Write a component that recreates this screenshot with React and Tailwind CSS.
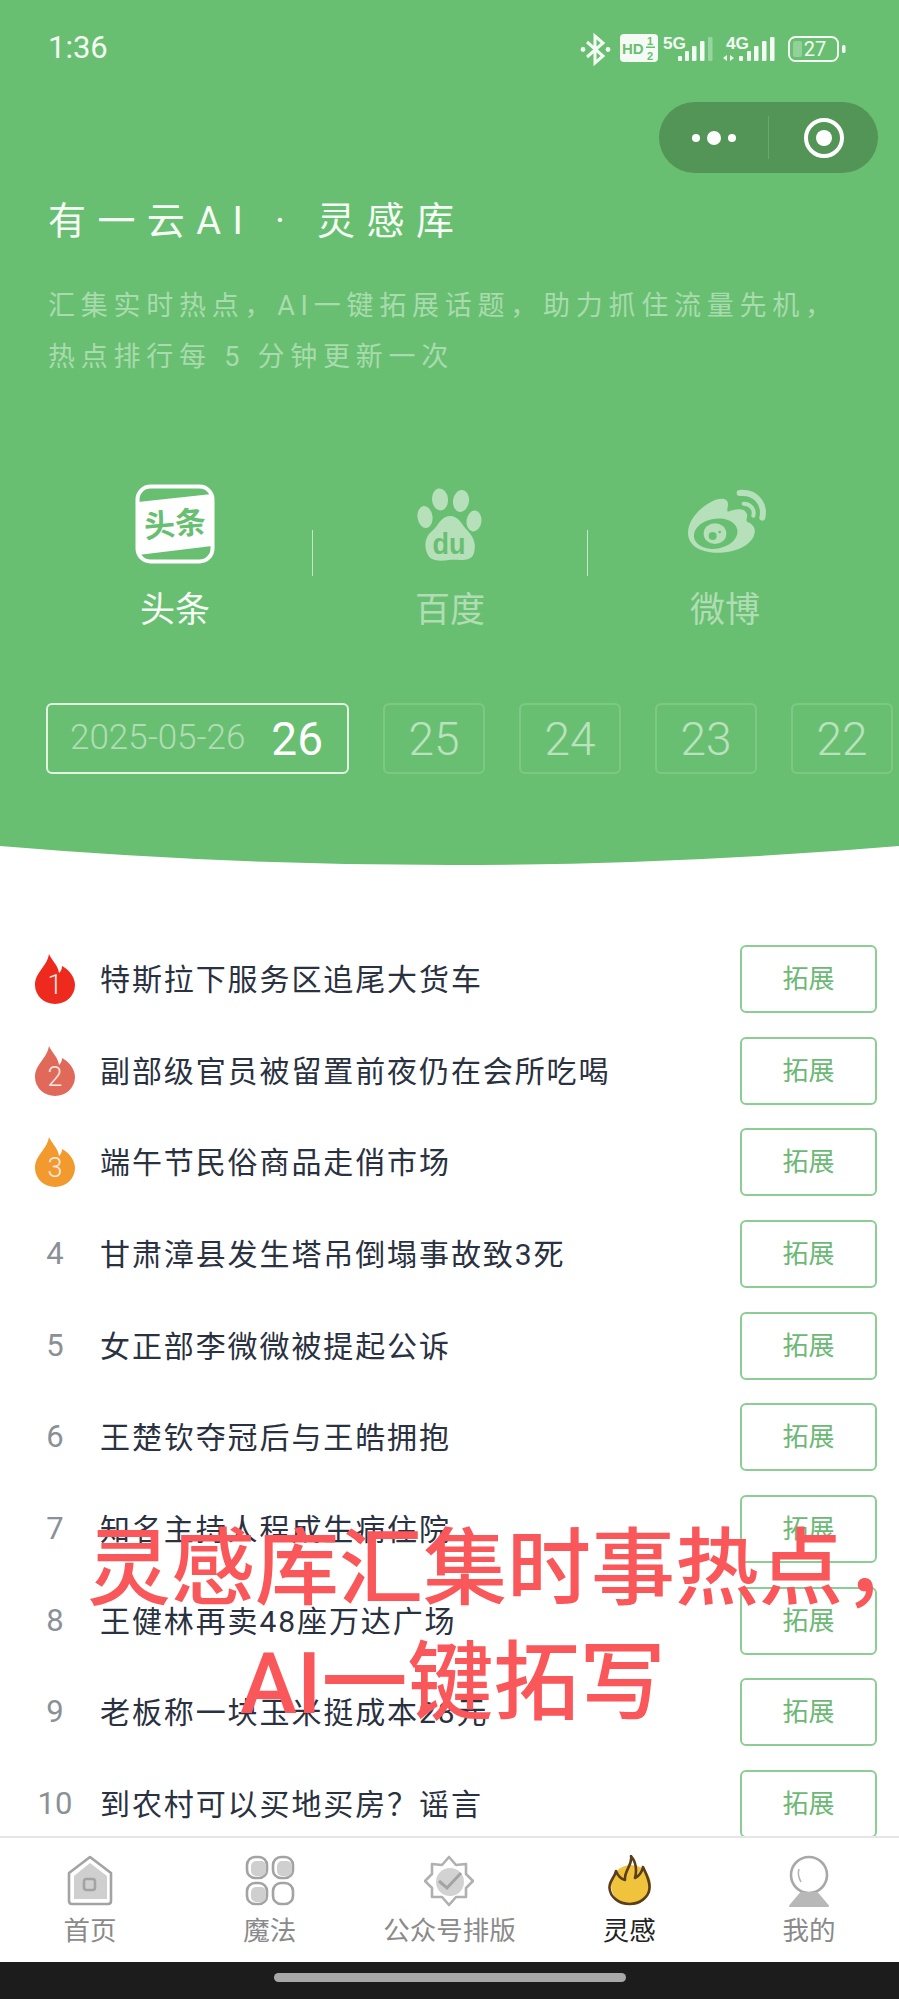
import React from "react";

const rows = [
  "特斯拉下服务区追尾大货车",
  "副部级官员被留置前夜仍在会所吃喝",
  "端午节民俗商品走俏市场",
  "甘肃漳县发生塔吊倒塌事故致3死",
  "女正部李微微被提起公诉",
  "王楚钦夺冠后与王皓拥抱",
  "知名主持人程成生病住院",
  "王健林再卖48座万达广场",
  "老板称一块玉米挺成本28元",
  "到农村可以买地买房？谣言",
];

function StatusIcons() {
  return (
    <svg width="294" height="40" viewBox="0 0 294 40" className="block" fill="#f4fbf4" fontFamily="'Liberation Sans', sans-serif">
      <path d="M12 12 L28 26 L20 33 V6 L28 13 L12 27" fill="none" stroke="#f4fbf4" strokeWidth="3" />
      <circle cx="8" cy="19.5" r="2.4" />
      <circle cx="33" cy="19.5" r="2.4" />
      <rect x="45" y="4" width="38" height="28" rx="4" />
      <text x="47" y="24" fontSize="15" fontWeight="700" fill="#69BF71">HD</text>
      <text x="72" y="15" fontSize="11" fontWeight="700" fill="#69BF71">1</text>
      <text x="72" y="30" fontSize="11" fontWeight="700" fill="#69BF71">2</text>
      <rect x="71" y="16.5" width="9" height="1.5" fill="#69BF71" />
      <text x="88" y="19" fontSize="17" fontWeight="700" textLength="23" lengthAdjust="spacingAndGlyphs">5G</text>
      <rect x="103" y="26" width="4" height="5" rx="1" />
      <rect x="110" y="21" width="4" height="10" rx="1" />
      <rect x="117" y="16" width="4.5" height="15" rx="1" />
      <rect x="125" y="11" width="4.5" height="20" rx="1" />
      <rect x="133" y="7" width="4.5" height="24" rx="1" opacity="0.35" />
      <text x="151" y="19" fontSize="17" fontWeight="700" textLength="23" lengthAdjust="spacingAndGlyphs">4G</text>
      <path d="M152 25 L148 28 L152 31 Z M155 25 L159 28 L155 31 Z" />
      <rect x="164" y="26" width="4" height="5" rx="1" />
      <rect x="172" y="21" width="4" height="10" rx="1" />
      <rect x="179" y="16" width="4.5" height="15" rx="1" />
      <rect x="187" y="11" width="4.5" height="20" rx="1" />
      <rect x="195" y="7" width="4.5" height="24" rx="1" />
      <rect x="214" y="7" width="49" height="24" rx="6.5" fill="none" stroke="#f4fbf4" strokeWidth="2" />
      <rect x="218" y="11" width="9" height="16" rx="2" opacity="0.3" />
      <text x="240" y="26" fontSize="20" textAnchor="middle" fontFamily="Roboto, sans-serif">27</text>
      <rect x="267" y="15" width="3.5" height="8" rx="1.5" />
    </svg>
  );
}

function Toutiao() {
  return (
    <svg width="80" height="80" viewBox="0 0 80 80" className="block">
      <rect x="2.5" y="2.5" width="75" height="75" rx="13" fill="none" stroke="#fff" strokeWidth="4" />
      <path d="M3 18 L77 10 V62 L3 71 Z" fill="#fff" />
      <text x="40" y="51" fontSize="31" fontWeight="700" textAnchor="middle" fill="#69BF71" transform="rotate(-5 40 40)" fontFamily="'Noto Sans CJK SC', sans-serif">头条</text>
    </svg>
  );
}

function Baidu() {
  return (
    <svg width="90" height="85" viewBox="0 0 90 85" className="block" fill="#B5E0B9">
      <ellipse cx="35" cy="17.5" rx="8" ry="11" transform="rotate(-5 35 17.5)" />
      <ellipse cx="56" cy="19" rx="8" ry="11" transform="rotate(8 56 19)" />
      <ellipse cx="20" cy="35" rx="7.5" ry="11" transform="rotate(-8 20 35)" />
      <ellipse cx="69" cy="39" rx="7.5" ry="10.5" transform="rotate(8 69 39)" />
      <path d="M45 34 C36 34 34 43 27 49 C20 55 19 63 22 71 C25 80 35 79 44 78 C53 77 66 81 69 71 C72 60 67 53 61 47 C56 41 53 34 45 34 Z" />
      <text x="44" y="72" fontSize="29" fontWeight="700" textAnchor="middle" fill="#69BF71" fontFamily="'Liberation Sans', sans-serif" textLength="33" lengthAdjust="spacingAndGlyphs">du</text>
    </svg>
  );
}

function Weibo() {
  return (
    <svg width="105" height="80" viewBox="0 0 315 240" className="mb-[6px] block" fill="#B5E0B9">
      <path d="M45 155 C45 120 75 85 110 65 C135 50 165 48 165 70 C165 80 160 90 165 92 C185 85 215 78 222 100 C224 110 218 118 222 122 C238 128 248 140 245 155 C240 190 190 215 135 215 C85 215 45 195 45 155 Z" />
      <ellipse cx="128" cy="158" rx="66" ry="45" transform="rotate(-10 128 158)" fill="#69BF71" />
      <ellipse cx="126" cy="158" rx="34" ry="31" />
      <circle cx="119" cy="165" r="12" fill="#69BF71" />
      <circle cx="140" cy="153" r="4" fill="#69BF71" />
      <path d="M200 36 C245 32 278 65 268 110" fill="none" stroke="#B5E0B9" strokeWidth="18" strokeLinecap="round" />
      <path d="M212 68 C232 68 246 84 241 104" fill="none" stroke="#B5E0B9" strokeWidth="12" strokeLinecap="round" />
    </svg>
  );
}

function Flame({ n, color }) {
  return (
    <div className="relative h-[50px] w-[40px]">
      <svg width="40" height="50" viewBox="0 0 40 50" className="block">
        <path d="M14 0 C17 7 23 11 24 19 C26 17 27 15 27 12 C35 16 40 24 40 31 A20 19 0 0 1 0 31 C0 18 12 13 14 0 Z" fill={color} />
      </svg>
      <span className="absolute inset-x-0 bottom-[3px] text-center text-[27px] leading-[32px] font-light text-[#fbe9e4]">{n}</span>
    </div>
  );
}

function Row({ i, text }) {
  const n = i + 1;
  return (
    <div className="flex h-[91.7px] shrink-0 items-center pl-[35px] pr-[22px]">
      <div className="mr-[25px] flex w-[40px] justify-center">
        {n === 1 && <Flame n={1} color="#EE2A1E" />}
        {n === 2 && <Flame n={2} color="#E0695A" />}
        {n === 3 && <Flame n={3} color="#F29A2E" />}
        {n > 3 && <span className="text-[31px] leading-[40px] text-[#8b9097]">{n}</span>}
      </div>
      <div className="mt-[2px] flex-1 text-[30px] leading-[40px] tracking-[1.9px] text-[#2a3140]">{text}</div>
      <div className="flex h-[68px] w-[137px] items-center justify-center rounded-[6px] border-2 border-[#8ccd93] pt-[1px] text-[26px] text-[#6cb874]">拓展</div>
    </div>
  );
}

const nav = [
  {
    label: "首页",
    icon: (
      <svg width="50" height="52" viewBox="0 0 50 52" className="block">
        <path d="M25 2 L46 18 V46 Q46 49 43 49 H7 Q4 49 4 46 V18 Z" fill="none" stroke="#a3a3a3" strokeWidth="2.6" strokeLinejoin="round" />
        <path d="M25 8 L42 21 V44 H9 V21 Z" fill="#cfcfcf" />
        <rect x="19" y="24" width="11" height="11" rx="2.5" fill="none" stroke="#a3a3a3" strokeWidth="2.6" />
      </svg>
    ),
  },
  {
    label: "魔法",
    icon: (
      <svg width="50" height="52" viewBox="0 0 50 52" className="block">
        <g fill="none" stroke="#a3a3a3" strokeWidth="2.6">
          <rect x="2" y="2" width="20" height="21" rx="8" />
          <rect x="28" y="2" width="20" height="21" rx="8" />
          <rect x="2" y="28" width="20" height="21" rx="8" />
          <rect x="28" y="28" width="20" height="21" rx="8" />
        </g>
        <rect x="6" y="6" width="15" height="15" rx="5" fill="#cfcfcf" />
        <rect x="32" y="6" width="15" height="15" rx="5" fill="#cfcfcf" />
        <rect x="6" y="32" width="15" height="15" rx="5" fill="#cfcfcf" />
      </svg>
    ),
  },
  {
    label: "公众号排版",
    icon: (
      <svg width="50" height="52" viewBox="0 0 50 52" className="block">
        <path d="M25 2 L32 10 L42 9 L42 19 L49 26 L42 33 L42 42 L32 42 L25 50 L18 42 L8 42 L8 33 L1 26 L8 19 L8 9 L18 10 Z" fill="none" stroke="#b0b0b0" strokeWidth="2.6" strokeLinejoin="round" />
        <circle cx="26" cy="27" r="14" fill="#d2d2d2" />
        <path d="M15 26 L23 33 L37 18" fill="none" stroke="#a3a3a3" strokeWidth="3" />
      </svg>
    ),
  },
  {
    label: "灵感",
    active: true,
    icon: (
      <svg width="50" height="52" viewBox="0 0 50 52" className="block">
        <circle cx="27" cy="30" r="20" fill="#F0C33C" />
        <path d="M27 1 C29 10 20 15 21 25 C17 24 14 21 12 16 C11 22 5 26 5.5 33 C6 42 15 49 25.5 49 C36 49 45 42 45.5 33 C46 25 42 19 39 12 C38 17 35 21 31 23 C33 15 32 7 27 1 Z" fill="none" stroke="#5a3d1a" strokeWidth="2.6" strokeLinejoin="round" />
      </svg>
    ),
  },
  {
    label: "我的",
    icon: (
      <svg width="50" height="52" viewBox="0 0 50 52" className="block">
        <circle cx="25" cy="20" r="18" fill="none" stroke="#a8a8a8" strokeWidth="2.6" />
        <path d="M17 27 Q13 20 15 14" fill="none" stroke="#b5b5b5" strokeWidth="1.6" />
        <path d="M17 38 H33 L44 51 H6 Z" fill="#b8b8b8" stroke="#b8b8b8" strokeWidth="2" strokeLinejoin="round" />
      </svg>
    ),
  },
];

export default function App() {
  return (
    <div className="relative flex h-[1999px] w-[899px] flex-col overflow-hidden bg-white font-['Roboto','Noto_Sans_CJK_SC',sans-serif]">
      <header className="h-[846px] shrink-0 bg-[#69BF71]">
        <div className="flex h-[96px] items-center justify-between pl-[48px] pr-[30px]">
          <span className="text-[31px] leading-[40px] text-[#f4fbf4]">1:36</span>
          <div className="mt-[4px]"><StatusIcons /></div>
        </div>
        <div className="mt-[6px] flex justify-end pr-[21px]">
          <div className="flex h-[71px] w-[219px] items-center rounded-full bg-[#539556]">
            <div className="flex w-[109px] items-center justify-center gap-[7px]">
              <span className="h-[8px] w-[8px] rounded-full bg-white" />
              <span className="h-[14px] w-[14px] rounded-full bg-white" />
              <span className="h-[8px] w-[8px] rounded-full bg-white" />
            </div>
            <div className="h-[43px] w-px bg-[#69a86d]" />
            <div className="flex flex-1 justify-center">
              <div className="flex h-[40px] w-[40px] items-center justify-center rounded-full border-[4px] border-white">
                <span className="h-[16px] w-[16px] rounded-full bg-white" />
              </div>
            </div>
          </div>
        </div>
        <h1 className="ml-[48px] mt-[26px] text-[38px] font-normal leading-[44px] tracking-[11.4px] text-[#f6fcf6]">有一云AI · 灵感库</h1>
        <p className="ml-[48px] mt-[38px] w-[830px] text-[27px] leading-[50.5px] tracking-[5.75px] text-[#A8DBAD]">
          <span className="block whitespace-nowrap">汇集实时热点，AI一键拓展话题，助力抓住流量先机，</span>
          <span className="block whitespace-nowrap">热点排行每 5 分钟更新一次</span>
        </p>
        <div className="ml-[38px] mt-[102px] flex w-[824px] items-start">
          <div className="flex flex-1 flex-col items-center">
            <div className="flex h-[80px] items-center"><Toutiao /></div>
            <span className="mt-[25px] text-[35px] leading-[44px] text-[#f6fcf6]">头条</span>
          </div>
          <div className="mt-[46px] h-[46px] w-px bg-[#c4e6c7]" />
          <div className="flex flex-1 flex-col items-center">
            <div className="flex h-[80px] items-center"><Baidu /></div>
            <span className="mt-[25px] text-[35px] leading-[44px] text-[#B0DDB4]">百度</span>
          </div>
          <div className="mt-[46px] h-[46px] w-px bg-[#c4e6c7]" />
          <div className="flex flex-1 flex-col items-center">
            <div className="flex h-[80px] items-center"><Weibo /></div>
            <span className="mt-[25px] text-[35px] leading-[44px] text-[#B0DDB4]">微博</span>
          </div>
        </div>
        <div className="ml-[46px] mt-[70px] flex gap-[34px]">
          <div className="flex h-[71px] w-[303px] items-center justify-between rounded-[6px] border-2 border-[#e2f3e4] pl-[22px] pr-[24px]">
            <span className="text-[35px] font-light text-[#B0DDB4]">2025-05-26</span>
            <span className="text-[46px] font-normal leading-[56px] text-white">26</span>
          </div>
          {[25, 24, 23, 22].map((d) => (
            <div key={d} className="flex h-[71px] w-[102px] items-center justify-center rounded-[6px] border-2 border-[#7ec885] text-[46px] font-light leading-[56px] text-[#B9E2BD]">{d}</div>
          ))}
        </div>
      </header>
      <svg width="899" height="20" viewBox="0 0 899 20" className="block shrink-0">
        <path d="M0 0 H899 Q450 38 0 0 Z" fill="#69BF71" />
      </svg>
      <main className="min-h-0 flex-1 overflow-hidden pt-[67px]">
        {rows.map((t, i) => <Row key={i} i={i} text={t} />)}
      </main>
      <nav className="flex h-[126px] shrink-0 border-t-2 border-[#e6e6e6] bg-white pt-[17px]">
        {nav.map((it) => (
          <div key={it.label} className="flex flex-1 flex-col items-center">
            {it.icon}
            <span className={`mt-[8px] whitespace-nowrap text-[26.5px] leading-[32px] ${it.active ? "text-[#222222]" : "text-[#8a8a8a]"}`}>{it.label}</span>
          </div>
        ))}
      </nav>
      <div className="flex h-[37px] shrink-0 justify-center bg-[#1c1c1c] pt-[11px]">
        <div className="h-[9px] w-[352px] rounded-full bg-[#a8a8a8]" />
      </div>
      <div className="pointer-events-none absolute left-0 top-[1513px] whitespace-nowrap font-medium leading-[114px] text-[#F9575A]">
        <div className="pl-[87px] text-[84px]">灵感库汇集时事热点<span className="tracking-[-54px]">，</span></div>
        <div className="pl-[240px] text-[86px]">AI一键拓写</div>
      </div>
    </div>
  );
}
